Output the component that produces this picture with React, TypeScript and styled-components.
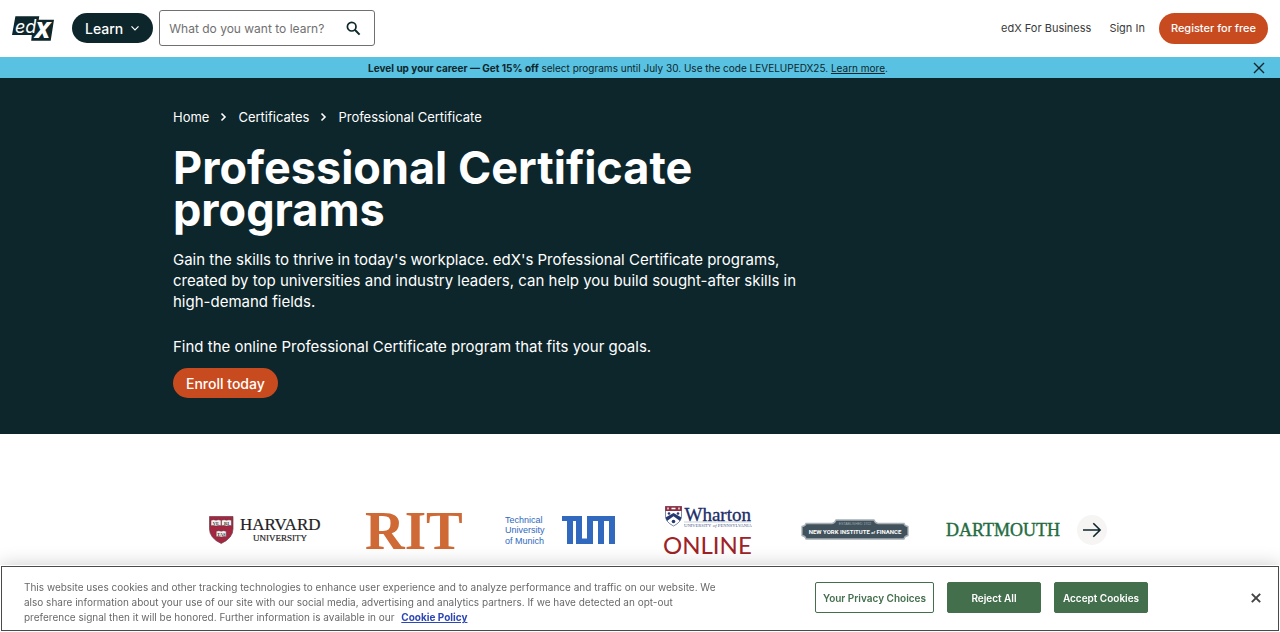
import React from "react";
import styled, { createGlobalStyle, css } from "styled-components";

const color = {
  ink: "#0d262b",
  orange: "#c84b20",
  sky: "#59c1e1",
  green: "#446f4d",
  grey: "#696969",
};

const GlobalStyle = createGlobalStyle`
  *, *::before, *::after { box-sizing: border-box; }
  body {
    margin: 0;
    background: #fff;
    color: ${color.ink};
    font-family: Inter, "Liberation Sans", sans-serif;
    font-size: 15px;
    overflow-x: hidden;
  }
  button, input { font-family: inherit; }
  button { cursor: pointer; }
  svg { overflow: visible; }
`;

const Header = styled.header`
  display: flex;
  align-items: center;
  height: 57px;
  padding: 0 12px 1px;
`;

const LogoLink = styled.a`
  display: flex;
  margin-right: 18px;
`;

const Pill = styled.button<{ $tone: "dark" | "orange"; $size?: "small" | "large" }>`
  display: inline-flex;
  align-items: center;
  justify-content: center;
  gap: 7px;
  height: 30px;
  padding: 0 13px;
  border: 0;
  border-radius: 16px;
  color: #fff;
  background: ${(p) => (p.$tone === "dark" ? color.ink : color.orange)};
  font-size: 14px;
  font-weight: 500;
  white-space: nowrap;
  ${(p) =>
    p.$size === "small" &&
    css`
      height: 31px;
      padding: 0 12px;
      font-size: 11px;
    `}
`;

const SearchForm = styled.form`
  display: flex;
  align-items: center;
  width: 216px;
  height: 36px;
  margin-left: 6px;
  padding: 0 13px 0 9px;
  border: 1px solid #707070;
  border-radius: 3px;
`;

const SearchInput = styled.input`
  flex: 1;
  min-width: 0;
  padding: 0;
  border: 0;
  outline: 0;
  background: transparent;
  color: ${color.ink};
  font-size: 12px;
  &::placeholder {
    color: #707070;
    opacity: 1;
  }
`;

const IconButton = styled.button`
  display: flex;
  align-items: center;
  justify-content: center;
  padding: 0;
  border: 0;
  background: transparent;
  color: ${color.ink};
`;

const HeaderNav = styled.nav`
  display: flex;
  align-items: center;
  gap: 18px;
  margin-left: auto;
  margin-right: 14px;
`;

const NavLink = styled.a`
  color: #3a3a3a;
  font-size: 11px;
  text-decoration: none;
`;

const Promo = styled.aside`
  display: flex;
  align-items: center;
  height: 21px;
  padding: 0 15px 0 3px;
  background: ${color.sky};
  font-size: 10px;
  p {
    flex: 1;
    margin: 0;
    text-align: center;
  }
  a {
    color: inherit;
  }
`;

const Hero = styled.section`
  padding: 30px 24px 36px;
  background: ${color.ink};
  color: #fff;
`;

const Container = styled.div`
  max-width: 934px;
  margin: 0 auto;
`;

const Breadcrumb = styled.ol`
  display: flex;
  align-items: center;
  margin: 0 0 21px;
  padding: 0;
  list-style: none;
  font-size: 13px;
  line-height: 18px;
  li {
    display: flex;
    align-items: center;
  }
  a {
    color: inherit;
    text-decoration: none;
  }
  svg {
    margin: 0 11px;
  }
`;

const Title = styled.h1`
  max-width: 620px;
  margin: 0 0 18px;
  font-size: 45px;
  font-weight: 700;
  line-height: 42px;
`;

const Lead = styled.p`
  max-width: 626px;
  margin: 0 0 24px;
  font-size: 15px;
  line-height: 21px;
`;

const LastLead = styled(Lead)`
  margin-bottom: 11px;
`;

const Partners = styled.section`
  padding: 48px 24px 54px;
`;

const Carousel = styled(Container)`
  display: flex;
  align-items: center;
  padding-left: 18px;
`;

const LogoGrid = styled.ul`
  flex: 1;
  display: grid;
  grid-template-columns: repeat(6, 1fr);
  align-items: center;
  height: 96px;
  margin: 0;
  padding: 0;
  list-style: none;
  li {
    display: flex;
    justify-content: center;
  }
`;

const NextButton = styled(IconButton)`
  width: 30px;
  height: 30px;
  border-radius: 50%;
  background: #f7f5f4;
`;

const CookieBanner = styled.section`
  position: fixed;
  left: 0;
  right: 0;
  bottom: 0;
  display: flex;
  align-items: center;
  justify-content: space-between;
  height: 67px;
  padding: 8px 18px 0 23px;
  border: 1px solid #fff;
  outline: 1px solid #4a4a4a;
  outline-offset: -2px;
  background: #fff;
  box-shadow: 0 0 18px rgba(0, 0, 0, 0.2);
`;

const CookieText = styled.p`
  width: 696px;
  margin: 0;
  color: ${color.grey};
  font-size: 10px;
  line-height: 15px;
  a {
    margin-left: 4px;
    color: #2d47b5;
    font-weight: 700;
  }
`;

const CookieActions = styled.div`
  display: flex;
  align-items: center;
  gap: 13px;
  margin-bottom: 10px;
`;

const CookieButton = styled.button<{ $outline?: boolean }>`
  width: ${(p) => (p.$outline ? 119 : 94)}px;
  height: 31px;
  padding: 0;
  border: 1px solid ${color.green};
  border-radius: 2px;
  background: ${(p) => (p.$outline ? "#fff" : color.green)};
  color: ${(p) => (p.$outline ? color.green : "#fff")};
  font-size: 10px;
  font-weight: 600;
  white-space: nowrap;
`;

const CloseCookies = styled(IconButton)`
  width: 10px;
  margin-left: 90px;
  color: #444;
`;

const serif = '"Liberation Serif", serif';

const EdxLogo = () => (
  <svg width="42" height="25" viewBox="0 0 42 25" role="img" aria-label="edX">
    <path d="M3.4.3H27.3L26.7 3.7H42L38.7 24.7H19.2L19.8 19H0Z" fill={color.ink} />
    <text x="3" y="17" fill="#fff" fontFamily="Inter, sans-serif" fontStyle="italic" fontSize="18">ed</text>
    <text x="23" y="22.200" fill="#fff" fontFamily='"Open Sans", sans-serif' fontStyle="italic" fontWeight="700" fontSize="29">x</text>
  </svg>
);

const Close = ({ size, weight }: { size: number; weight: number }) => (
  <svg width={size} height={size} viewBox="0 0 12 12" fill="none" stroke="currentColor" strokeWidth={weight}>
    <path d="M1 1 11 11M11 1 1 11" />
  </svg>
);

const Chevron = () => (
  <svg width="7" height="10" viewBox="0 0 7 10" fill="none" stroke="currentColor" strokeWidth="1.6" aria-hidden="true">
    <path d="M1.500 1.500 5 5 1.500 8.500" />
  </svg>
);

const Book = ({ x, y, label }: { x: number; y: number; label: string }) => (
  <g transform={`translate(${x} ${y})`}>
    <path d="M0 .8Q2.5-.4 5 .7Q7.500-.4 10 .8V6.300Q7.500 5.400 5 6.600Q2.500 5.400 0 6.300Z" fill="#f6eeee" stroke="#55303a" strokeWidth=".5" />
    <text x="5" y="5" textAnchor="middle" fontFamily={serif} fontWeight="700" fontSize="4.500" fill="#333">{label}</text>
  </g>
);

const HarvardLogo = () => (
  <svg width="113" height="30" viewBox="0 0 113 30" role="img" aria-label="Harvard University">
    <path d="M1.500 1.500H25V14Q25 23 13.200 28.500Q1.500 23 1.500 14Z" fill="#a32740" stroke="#6b3c46" strokeWidth=".7" />
    <Book x={3} y={4.500} label="VE" />
    <Book x={13.500} y={4.500} label="RI" />
    <Book x={8.200} y={15.500} label="TAS" />
    <text x="32" y="15" fontFamily={serif} fontSize="17" fill="#1e1e1e" stroke="#1e1e1e" strokeWidth=".2">HARVARD</text>
    <text x="45" y="25.500" fontFamily={serif} fontSize="9" fill="#1e1e1e" stroke="#1e1e1e" strokeWidth=".2">UNIVERSITY</text>
  </svg>
);

const RitLogo = () => (
  <svg width="98" height="40" viewBox="0 0 98 40" role="img" aria-label="RIT">
    <text x="2" y="39" fontFamily={serif} fontWeight="700" fontSize="55" fill="#cf6a36">RIT</text>
  </svg>
);

const TumLogo = () => (
  <svg width="110" height="32" viewBox="0 0 110 32" role="img" aria-label="Technical University of Munich">
    <g fontFamily='"Liberation Sans", sans-serif' fontSize="9" fill="#3069be">
      <text x="0" y="8.500">Technical</text>
      <text x="0" y="19">University</text>
      <text x="0" y="30">of Munich</text>
    </g>
    <path d="M57 2H77V24.500H82V2H110V30H104V7H99V30H93V7H88V30H71V7H68V30H62V7H57Z" fill="#3069be" />
  </svg>
);

const WhartonLogo = () => (
  <svg width="88" height="50" viewBox="0 0 88 50" role="img" aria-label="Wharton Online, University of Pennsylvania">
    <path d="M1.500 1.500H17.500V11Q17.500 17 9.500 21Q1.500 17 1.500 11Z" fill="#fff" stroke="#26386f" strokeWidth=".6" />
    <path d="M1.200 1.200H17.800V6H1.200Z" fill="#8f3042" />
    <path d="M4 2.500V4.500M7.500 3.500H11.500M15 2.500V4.500" stroke="#fff" strokeWidth="1.300" />
    <path d="M1.500 12.500 9.500 8 17.500 12.500 16 16 9.500 11.300 3 16Z" fill="#26386f" />
    <g fill="#26386f"><circle cx="5" cy="8.500" r="1.300" /><circle cx="14" cy="8.500" r="1.300" /><circle cx="9.500" cy="16.500" r="1.800" /></g>
    <text x="20.500" y="15.500" fontFamily={serif} fontSize="19" fill="#1c2d69" stroke="#1c2d69" strokeWidth=".35">Wharton</text>
    <path d="M20 17H87" stroke="#8e9cba" strokeWidth=".5" />
    <text x="20" y="22" fontFamily={serif} fontSize="5" fill="#4d5d8c">U<tspan fontSize="4.500">NIVERSITY</tspan> <tspan fontStyle="italic">of</tspan> P<tspan fontSize="4.500">ENNSYLVANIA</tspan></text>
    <text x="-1" y="49" fontFamily="Lato, sans-serif" fontSize="24" fill="#9e2226">ONLINE</text>
  </svg>
);

const NyifLogo = () => (
  <svg width="108" height="22" viewBox="0 0 108 22" role="img" aria-label="New York Institute of Finance">
    <path d="M5 4.500H31Q34 4 35 1H73Q74 4 77 4.500H103Q103.500 7 107 7.500V16.500Q103.500 17 103 20H5Q4.500 17 1 16.500V7.500Q4.500 7 5 4.500Z" fill="#42525c" stroke="#a5afb5" strokeWidth="1.300" />
    <text x="54" y="6" textAnchor="middle" fontFamily='"Liberation Sans", sans-serif' fontSize="3.500" fill="#9ba8b0">ESTABLISHED 1922</text>
    <text x="54" y="15" textAnchor="middle" fontFamily="Roboto, sans-serif" fontWeight="700" fontSize="6" fill="#fff">NEW YORK INSTITUTE <tspan fontSize="4" fontStyle="italic">of</tspan> FINANCE</text>
  </svg>
);

const DartmouthLogo = () => (
  <svg width="116" height="20" viewBox="0 0 116 20" role="img" aria-label="Dartmouth">
    <text x="1" y="16" fontFamily={serif} fontSize="18" fill="#246b3f" stroke="#246b3f" strokeWidth=".4">DARTMOUTH</text>
  </svg>
);

const partners = [HarvardLogo, RitLogo, TumLogo, WhartonLogo, NyifLogo, DartmouthLogo];

export default function App() {
  return (
    <>
      <GlobalStyle />
      <Header>
        <LogoLink href="#home"><EdxLogo /></LogoLink>
        <Pill $tone="dark" type="button">
          Learn
          <svg width="10" height="8" viewBox="0 0 10 8" fill="none" stroke="currentColor" strokeWidth="1.200" aria-hidden="true">
            <path d="M1.500 2.300 5 5.800 8.500 2.300" />
          </svg>
        </Pill>
        <SearchForm role="search">
          <SearchInput type="text" aria-label="Search" placeholder="What do you want to learn?" />
          <IconButton type="submit" aria-label="Submit search">
            <svg width="15" height="15" viewBox="0 0 15 15" fill="none" stroke="currentColor" strokeWidth="1.700">
              <circle cx="5.700" cy="5.700" r="4.300" />
              <path d="M8.800 8.800 13.600 13.600" strokeWidth="2" />
            </svg>
          </IconButton>
        </SearchForm>
        <HeaderNav aria-label="Account">
          <NavLink href="#business">edX For Business</NavLink>
          <NavLink href="#signin">Sign In</NavLink>
        </HeaderNav>
        <Pill $tone="orange" $size="small" type="button">Register for free</Pill>
      </Header>
      <Promo>
        <p>
          <strong>Level up your career — Get 15% off</strong> select programs until July 30. Use the code LEVELUPEDX25. <a href="#promo">Learn more</a>.
        </p>
        <IconButton type="button" aria-label="Dismiss offer"><Close size={12} weight={1.4} /></IconButton>
      </Promo>
      <main>
        <Hero>
          <Container>
            <nav aria-label="Breadcrumb">
              <Breadcrumb>
                <li><a href="#home">Home</a><Chevron /></li>
                <li><a href="#certificates">Certificates</a><Chevron /></li>
                <li aria-current="page">Professional Certificate</li>
              </Breadcrumb>
            </nav>
            <Title>Professional Certificate programs</Title>
            <Lead>
              Gain the skills to thrive in today's workplace. edX's Professional Certificate programs, created by top
              universities and industry leaders, can help you build sought-after skills in high-demand fields.
            </Lead>
            <LastLead>Find the online Professional Certificate program that fits your goals.</LastLead>
            <Pill $tone="orange" type="button">Enroll today</Pill>
          </Container>
        </Hero>
        <Partners aria-label="Partners">
          <Carousel>
            <LogoGrid>
              {partners.map((Logo, i) => (
                <li key={i}><Logo /></li>
              ))}
            </LogoGrid>
            <NextButton type="button" aria-label="Next partners">
              <svg width="20" height="16" viewBox="0 0 20 16" fill="none" stroke="currentColor" strokeWidth="1.600">
                <path d="M1 8H18M11.300 1.200 18.100 8 11.300 14.800" />
              </svg>
            </NextButton>
          </Carousel>
        </Partners>
      </main>
      <CookieBanner aria-label="Cookie notice">
        <CookieText>
          This website uses cookies and other tracking technologies to enhance user experience and to analyze
          performance and traffic on our website. We also share information about your use of our site with our social
          media, advertising and analytics partners. If we have detected an opt-out preference signal then it will be
          honored. Further information is available in our <a href="#cookies">Cookie Policy</a>
        </CookieText>
        <CookieActions>
          <CookieButton $outline type="button">Your Privacy Choices</CookieButton>
          <CookieButton type="button">Reject All</CookieButton>
          <CookieButton type="button">Accept Cookies</CookieButton>
          <CloseCookies type="button" aria-label="Close"><Close size={10} weight={2.4} /></CloseCookies>
        </CookieActions>
      </CookieBanner>
    </>
  );
}
